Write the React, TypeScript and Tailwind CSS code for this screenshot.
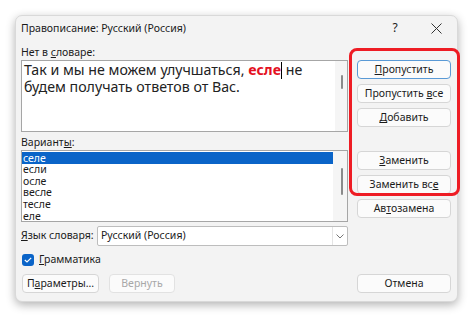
import React from "react";

const ui = { fontFamily: '"Noto Sans", "Open Sans", sans-serif' };

const Btn = ({ children, primary, disabled, w = "w-[94px]" }: { children: React.ReactNode; primary?: boolean; disabled?: boolean; w?: string }) => (
  <div
    className={`${w} h-[19px] flex items-center justify-center rounded-[4px] border text-[10.5px] leading-none ${
      primary ? "border-[#5a9ad6] bg-[#fbfbfb]" : "border-[#d6d6d6] bg-[#fbfbfb]"
    } ${disabled ? "text-[#a8a8a8] border-[#e2e2e2] bg-[#f5f5f5]" : "text-[#1b1b1b]"}`}
  >
    {children}
  </div>
);

const variants = ["селе", "если", "осле", "весле", "тесле", "еле"];

export default function App() {
  return (
    <div className="w-[474px] h-[317px] bg-white pt-[15px] pl-[15px]" style={ui}>
      <div className="relative w-[443px] h-[287px] bg-[#f3f3f3] rounded-[7px] border border-[#d9d9d9] shadow-[0_3px_10px_rgba(0,0,0,0.3)] flex flex-col">
        {/* title bar */}
        <div className="h-[24px] flex items-center pl-[5px] text-[10.5px] text-[#1a1a1a]">
          <span className="flex-1 pt-[1px]">Правописание: Русский (Россия)</span>
          <span className="w-[20px] text-center text-[12px] mr-[26px]">?</span>
          <svg width="11" height="11" viewBox="0 0 11 11" className="mr-[15px]">
            <path d="M0.5 0.5 L10.5 10.5 M10.5 0.5 L0.5 10.5" stroke="#333" strokeWidth="1" />
          </svg>
        </div>

        <div className="flex pl-[5px] pr-[6px]">
          {/* left column */}
          <div className="w-[327px] flex flex-col">
            <div className="h-[20px] flex items-end pb-[3px] text-[10.5px] text-[#1a1a1a] leading-none">
              <span>
                Нет в <span className="underline">с</span>ловаре:
              </span>
            </div>
            <div className="h-[72px] border border-[#a6a6a6] bg-white flex">
              <div className="flex-1 pl-[2px] pt-[1px] text-[14.2px] leading-[16px] text-[#222]">
                Так и мы не можем улучшаться, <b className="text-[#e4101f]">есле</b>
                <span className="inline-block w-[1px] h-[17px] bg-black align-[-4px]" /> не будем получать ответов от Вас.
              </div>
              <div className="w-[12px] bg-[#f5f5f5] flex justify-center pt-[14px]">
                <div className="w-[2px] h-[14px] bg-[#8a8a8a] rounded-full ml-[2px]" />
              </div>
            </div>
            <div className="h-[18px] flex items-end pb-[3px] text-[10.5px] text-[#1a1a1a] leading-none">
              <span>
                Вариант<span className="underline">ы</span>:
              </span>
            </div>
            <div className="h-[72px] border border-[#a6a6a6] bg-white flex overflow-hidden">
              <div className="flex-1 pt-[1px] text-[10.5px] text-[#1a1a1a]">
                {variants.map((v, i) => (
                  <div
                    key={v}
                    className={`pl-[1px] ${i === 0 ? "bg-[#0a64c8] text-white h-[12px] leading-[12px]" : "h-[11.7px] leading-[11.7px]"}`}
                  >
                    {v}
                  </div>
                ))}
              </div>
              <div className="w-[14px] bg-[#f5f5f5] flex justify-center pt-[17px]">
                <div className="w-[2px] h-[27px] bg-[#8a8a8a] rounded-full ml-[3px]" />
              </div>
            </div>
            <div className="mt-[4px] h-[20px] flex items-center">
              <span className="w-[76px] text-[10.5px] text-[#1a1a1a]">
                <span className="underline">Я</span>зык словаря:
              </span>
              <div className="flex-1 h-[20px] border border-[#bdbdbd] bg-white flex items-center rounded-[2px]">
                <span className="flex-1 pl-[3px] text-[10.5px] text-[#1a1a1a]">Русский (Россия)</span>
                <div className="w-[15px] h-full border-l border-[#e4e4e4] flex items-center justify-center">
                  <svg width="8" height="5" viewBox="0 0 8 5">
                    <path d="M0.5 0.5 L4 4 L7.5 0.5" fill="none" stroke="#666" strokeWidth="0.9" />
                  </svg>
                </div>
              </div>
            </div>
          </div>

          {/* right column */}
          <div className="flex-1 flex flex-col items-end pt-[20px] gap-[5px]">
            <Btn primary>
              <span><span className="underline">П</span>ропустить</span>
            </Btn>
            <Btn>
              <span>Пропустить <span className="underline">в</span>се</span>
            </Btn>
            <Btn>
              <span><span className="underline">Д</span>обавить</span>
            </Btn>
            <div className="h-[14px]" />
            <Btn>
              <span><span className="underline">З</span>аменить</span>
            </Btn>
            <Btn>
              <span>Заменить вс<span className="underline">е</span></span>
            </Btn>
            <Btn>
              <span>Ав<span className="underline">т</span>озамена</span>
            </Btn>
          </div>
        </div>

        {/* grammar */}
        <div className="mt-[8px] pl-[6px] flex items-center gap-[5px] h-[12px]">
          <div className="w-[12px] h-[12px] rounded-[3px] bg-[#0a64c8] flex items-center justify-center">
            <svg width="8" height="6" viewBox="0 0 8 6">
              <path d="M0.8 3 L3 5 L7.2 0.8" fill="none" stroke="white" strokeWidth="1.2" />
            </svg>
          </div>
          <span className="text-[10.5px] text-[#1a1a1a]">
            <span className="underline">Г</span>рамматика
          </span>
        </div>

        {/* bottom buttons */}
        <div className="mt-[8px] pl-[6px] pr-[6px] flex items-center">
          <Btn w="w-[77px]">
            <span>П<span className="underline">а</span>раметры...</span>
          </Btn>
          <div className="ml-[10px]">
            <Btn w="w-[66px]" disabled>
              Вернуть
            </Btn>
          </div>
          <div className="flex-1" />
          <Btn>Отмена</Btn>
        </div>

        {/* red highlight annotation */}
        <div className="absolute left-[333px] top-[32px] w-[111px] h-[148px] border-[3px] border-[#ee1c24] rounded-[8px]" />
      </div>
    </div>
  );
}
